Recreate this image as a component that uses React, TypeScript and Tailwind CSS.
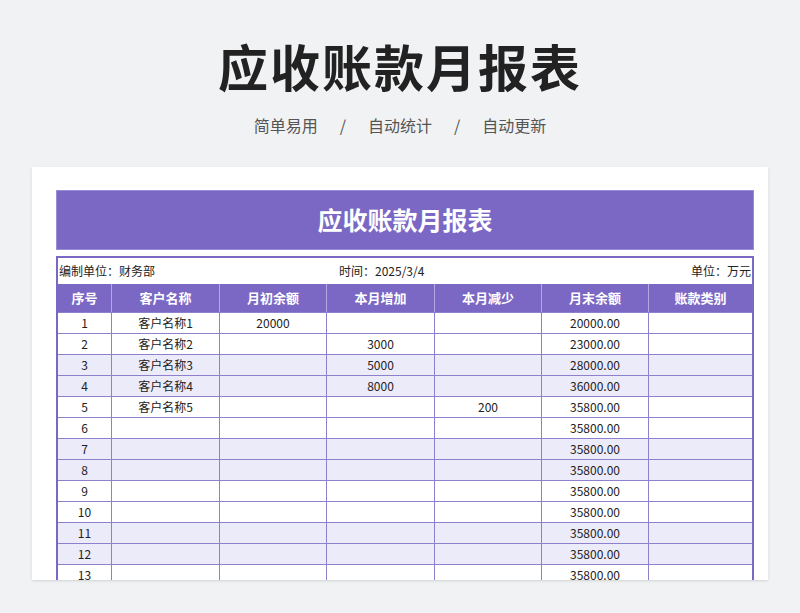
export default function App() {
  const rows = [
    ["1", "客户名称1", "20000", "", "", "20000.00"],
    ["2", "客户名称2", "", "3000", "", "23000.00"],
    ["3", "客户名称3", "", "5000", "", "28000.00"],
    ["4", "客户名称4", "", "8000", "", "36000.00"],
    ["5", "客户名称5", "", "", "200", "35800.00"],
  ];
  for (let i = 6; i <= 14; i++) rows.push([String(i), "", "", "", "", "35800.00"]);
  const widths = ["w-[54px]", "w-[108px]", "w-[107px]", "w-[108px]", "w-[107px]", "w-[107px]", "flex-1"];
  const heads = ["序号", "客户名称", "月初余额", "本月增加", "本月减少", "月末余额", "账款类别"];
  return (
    <div className="w-[800px] h-[613px] bg-[#f1f2f4] overflow-hidden" style={{ fontFamily: '"Noto Sans CJK SC", "Noto Sans", sans-serif' }}>
      <div className="h-[95px] flex items-end justify-center pb-[5px]">
        <div className="text-[50px] font-bold text-[#222] leading-none tracking-[2px]">应收账款月报表</div>
      </div>
      <div className="h-[60px] flex items-center justify-center gap-[22px] text-[16px] text-[#555]">
        <span>简单易用</span><span>/</span><span>自动统计</span><span>/</span><span>自动更新</span>
      </div>
      <div className="mx-[32px] mt-[12px] h-[413px] bg-white overflow-hidden pt-[23px] pl-[24px] pr-[14px] shadow-sm">
        <div className="h-[60px] bg-[#7b68c4] border border-[#9a8cd6] flex items-center justify-center text-white text-[25px] font-bold">应收账款月报表</div>
        <div className="mt-[6px] border-x-2 border-t-2 border-[#7b68c4]">
          <div className="h-[26px] flex items-center text-[12px] text-[#222] px-[1px]">
            <span className="w-[280px]">编制单位：财务部</span>
            <span className="flex-1">时间：2025/3/4</span>
            <span>单位：万元</span>
          </div>
          <div className="flex h-[28px] bg-[#7b68c4] text-white text-[13px] font-bold">
            {heads.map((h, i) => (
              <div key={i} className={`${widths[i]} flex items-center justify-center border-r border-[#b3a8e2] last:border-r-0`}>{h}</div>
            ))}
          </div>
          {rows.map((r, ri) => (
            <div key={ri} className={`flex h-[21px] text-[12px] text-[#222] border-t border-[#8e80cc] ${Math.floor(ri / 2) % 2 === 1 ? "bg-[#ecebfa]" : "bg-white"}`}>
              {[...r, ""].map((c, ci) => (
                <div key={ci} className={`${widths[ci]} flex items-center justify-center border-r border-[#8e80cc] last:border-r-0`}>{c}</div>
              ))}
            </div>
          ))}
        </div>
      </div>
    </div>
  );
}
